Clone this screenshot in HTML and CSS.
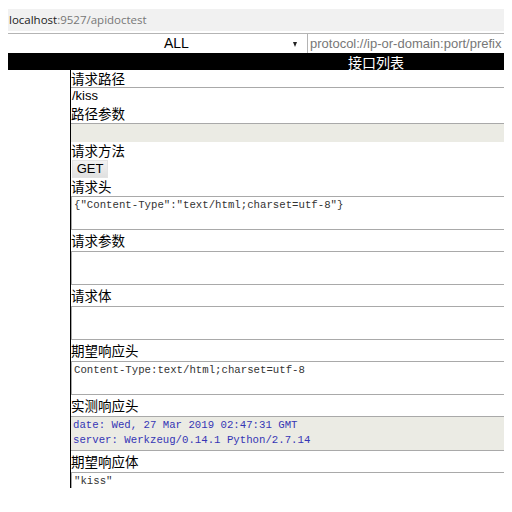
FILE: index.html
```html
<!DOCTYPE html>
<html>
<head>
<meta charset="utf-8">
<link rel="stylesheet" href="styles.css">
</head>
<body>
<div class="addr"><span class="host">localhost</span><span class="rest">:9527/apidoctest</span></div>
<div class="toolbar">
  <div class="select"><span class="sel-text">ALL</span><span class="arrow"></span></div>
  <div class="prefix">protocol://ip-or-domain:port/prefix</div>
</div>
<div class="titlebar"><span class="title">接口列表</span></div>
<div class="main">
  <div class="side"></div>
  <div class="detail">
    <div class="label l1">请求路径</div>
    <div class="field path">/kiss</div>
    <div class="label l2">路径参数</div>
    <div class="field disabled"></div>
    <div class="label l3">请求方法</div>
    <div class="btnrow"><span class="btn">GET</span></div>
    <div class="label l4">请求头</div>
    <div class="area">{"Content-Type":"text/html;charset=utf-8"}</div>
    <div class="label">请求参数</div>
    <div class="area"></div>
    <div class="label">请求体</div>
    <div class="area"></div>
    <div class="label">期望响应头</div>
    <div class="area">Content-Type:text/html;charset=utf-8</div>
    <div class="label">实测响应头</div>
    <div class="pre">date: Wed, 27 Mar 2019 02:47:31 GMT
server: Werkzeug/0.14.1 Python/2.7.14</div>
    <div class="label">期望响应体</div>
    <div class="area last">"kiss"</div>
  </div>
</div>
</body>
</html>
```
FILE: styles.css
```css
html, body { background: #fff; }
body {
  margin: 9px 8px 0 8px;
  font-family: "Liberation Sans", Arial, "Noto Sans CJK SC", sans-serif;
  color: #000;
}
.addr {
  height: 22px;
  background: #f1f1f1;
  font-family: "Open Sans", "Noto Sans", sans-serif;
  font-size: 11.5px;
  line-height: 22px;
  padding-left: 1px;
}
.host { color: #222; }
.rest { color: #777; }
.toolbar {
  margin-top: 2px;
  display: flex;
  height: 19px;
  border-top: 1px solid #b4b4b4;
}
.select {
  width: 299px;
  position: relative;
  font-size: 14px;
  line-height: 19px;
}
.sel-text { padding-left: 156px; }
.arrow {
  position: absolute;
  left: 285px;
  top: 8px;
  width: 0; height: 0;
  border-left: 2.5px solid transparent;
  border-right: 2.5px solid transparent;
  border-top: 5px solid #222;
}
.prefix {
  flex: 1;
  border-left: 1px solid #b4b4b4;
  padding-left: 2px;
  font-size: 13px;
  line-height: 19px;
  color: #777;
  white-space: nowrap;
  overflow: hidden;
}
.titlebar {
  height: 17px;
  background: #000;
  position: relative;
}
.title {
  position: absolute;
  left: 340px;
  top: 1px;
  color: #fff;
  font-family: "Noto Sans CJK SC", sans-serif;
  font-size: 14px;
  line-height: 16px;
}
.main {
  display: grid;
  grid-template-columns: 62px 1fr;
}
.detail {
  border-left: 1px solid #000;
  height: 418px;
  overflow: hidden;
}
.label {
  font-family: "Noto Sans CJK SC", sans-serif;
  font-size: 13.5px;
  line-height: 21px;
  height: 21px;
  white-space: nowrap;
}
.l1 { height: 17px; line-height: 17px; }
.l2 { height: 19px; line-height: 19px; }
.l3 { height: 17px; line-height: 17px; }
.l4 { height: 19px; line-height: 19px; }
.field {
  border-top: 1px solid #a9a9a9;
}
.path {
  height: 16px;
  font-size: 13px;
  line-height: 16px;
  padding-left: 1px;
}
.disabled {
  height: 18px;
  background: #ebebe4;
}
.btnrow { height: 18px; }
.btn {
  display: inline-block;
  margin-left: 1px;
  width: 36px;
  height: 18px;
  box-sizing: border-box;
  background: linear-gradient(#f2f2f2, #e0e0e0);
  border: 1px solid #e3e3e3;
  font-size: 13px;
  line-height: 16px;
  text-align: center;
}
.area, .pre {
  font-family: "Liberation Mono", "DejaVu Sans Mono", monospace;
  font-size: 10.7px;
  line-height: 15px;
  white-space: pre;
  padding: 1px 2px;
  box-sizing: border-box;
  color: #333;
}
.area {
  height: 34px;
  border-top: 1px solid #a9a9a9;
  border-bottom: 1px solid #a9a9a9;
  border-left: 1px solid #a9a9a9;
}
.area.last { border-bottom: none; height: 17px; }
.pre {
  height: 35px;
  background: #ebebe4;
  border-top: 1px solid #a9a9a9;
  border-bottom: 1px solid #a9a9a9;
  color: #3535b5;
}
```
